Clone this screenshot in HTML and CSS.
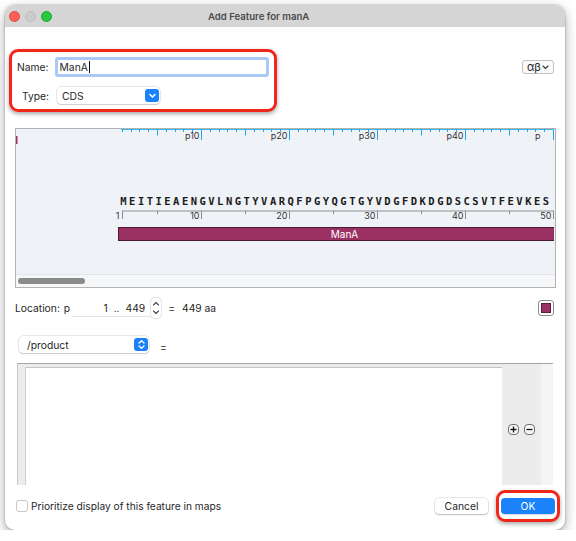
FILE: index.html
```html
<!DOCTYPE html>
<html lang="en">
<head>
    <meta charset="UTF-8">
    <title>Add Feature for manA</title>
    <link rel="stylesheet" href="styles.css">
</head>
<body>

    <div class="window">

        <!-- TITLE BAR -->
        <div class="titlebar">
            <div class="lights">
                <span class="light red"></span>
                <span class="light idle"></span>
                <span class="light green"></span>
            </div>
            <div class="title">Add Feature for manA</div>
        </div>

        <!-- NAME / TYPE -->
        <div class="top-row">
            <div class="name-box">
                <div class="field-row">
                    <label class="field-label">Name:</label>
                    <div class="text-input">ManA<span class="caret"></span></div>
                </div>
                <div class="field-row type-row">
                    <label class="field-label">Type:</label>
                    <div class="popup type-popup">
                        <span>CDS</span>
                        <span class="popup-arrow">
                            <svg width="9" height="9" viewBox="0 0 9 9"><path d="M2 3.5 L4.5 6 L7 3.5" fill="none" stroke="#fff" stroke-width="1.6" stroke-linecap="round" stroke-linejoin="round"/></svg>
                        </span>
                    </div>
                </div>
            </div>

            <div class="alpha-btn">αβ<svg width="7" height="5" viewBox="0 0 7 5"><path d="M1 1 L3.5 3.5 L6 1" fill="none" stroke="#333" stroke-width="1.1" stroke-linecap="round"/></svg></div>
        </div>

        <!-- SEQUENCE VIEW -->
        <div class="seq-view">
            <svg class="seq-canvas" width="538" height="145" viewBox="0 0 538 145">

                <!-- top ruler: one tick per residue, longer every 5 and 10 -->
                <rect x="105" y="0" width="433" height="1" fill="#3db6e8"/>
                <path class="tick-top" d="M106.5 0v3 M115.5 0v3 M123.5 0v3 M132.5 0v3 M150.5 0v3 M159.5 0v3 M167.5 0v3 M176.5 0v3
                    M194.5 0v3 M203.5 0v3 M211.5 0v3 M220.5 0v3 M238.5 0v3 M247.5 0v3 M255.5 0v3 M264.5 0v3
                    M282.5 0v3 M291.5 0v3 M299.5 0v3 M308.5 0v3 M326.5 0v3 M335.5 0v3 M343.5 0v3 M352.5 0v3
                    M370.5 0v3 M379.5 0v3 M387.5 0v3 M396.5 0v3 M414.5 0v3 M423.5 0v3 M431.5 0v3 M440.5 0v3
                    M458.5 0v3 M467.5 0v3 M475.5 0v3 M484.5 0v3 M502.5 0v3 M511.5 0v3 M519.5 0v3 M528.5 0v3
                    M141.5 0v6.5 M229.5 0v6.5 M317.5 0v6.5 M405.5 0v6.5 M493.5 0v6.5
                    M185.5 0v11 M273.5 0v11 M361.5 0v11 M449.5 0v11 M537.5 0v11"/>
                <g class="ruler-label">
                    <text x="183.5" y="9.5" text-anchor="end">p10</text>
                    <text x="271.5" y="9.5" text-anchor="end">p20</text>
                    <text x="359.5" y="9.5" text-anchor="end">p30</text>
                    <text x="447.5" y="9.5" text-anchor="end">p40</text>
                    <text x="519" y="9.5">p</text>
                </g>

                <!-- feature marker at the map edge -->
                <rect x="0" y="7" width="1.5" height="8" fill="#9b3063"/>

                <!-- residues -->
                <text class="residues" x="104.3" y="76">MEITIEAENGVLNGTYVARQFPGYQGTGYVDGFDKDGDSCSVTFEVKES</text>

                <!-- residue ruler -->
                <rect x="106" y="81.5" width="432" height="1" fill="#8f8f8f"/>
                <path class="tick-bottom" d="M106.5 82v8 M141.5 82v3 M229.5 82v3 M317.5 82v3 M405.5 82v3 M493.5 82v3
                    M185.5 82v8 M273.5 82v8 M361.5 82v8 M449.5 82v8 M537.5 82v8"/>
                <g class="ruler-label">
                    <text x="103.5" y="90" text-anchor="end">1</text>
                    <text x="183.5" y="90" text-anchor="end">10</text>
                    <text x="271.5" y="90" text-anchor="end">20</text>
                    <text x="359.5" y="90" text-anchor="end">30</text>
                    <text x="447.5" y="90" text-anchor="end">40</text>
                    <text x="535.5" y="90" text-anchor="end">50</text>
                </g>

                <!-- feature -->
                <rect x="102.5" y="98.5" width="440" height="13" fill="#9b3063" stroke="#4a1a30" stroke-width="1"/>
                <text class="feature-label" x="328.5" y="108.5" text-anchor="middle">ManA</text>
            </svg>
            <div class="hscroll"><div class="hscroll-thumb"></div></div>
        </div>

        <!-- LOCATION -->
        <div class="location-row">
            <span>Location:</span>
            <span class="loc-p">p</span>
            <div class="loc-field">1 .. 449</div>
            <div class="stepper">
                <svg width="8" height="18" viewBox="0 0 8 18"><path d="M1.5 6 L4 3.5 L6.5 6" fill="none" stroke="#444" stroke-width="1.1" stroke-linecap="round"/><path d="M1.5 12 L4 14.5 L6.5 12" fill="none" stroke="#444" stroke-width="1.1" stroke-linecap="round"/></svg>
            </div>
            <span class="eq">=</span>
            <span>449 aa</span>
            <div class="color-well"><div class="color-well-fill"></div></div>
        </div>

        <!-- QUALIFIER -->
        <div class="qual-row">
            <div class="popup qual-popup">
                <span>/product</span>
                <span class="popup-arrow">
                    <svg width="9" height="11" viewBox="0 0 9 11"><path d="M2 4 L4.5 1.8 L7 4" fill="none" stroke="#fff" stroke-width="1.4" stroke-linecap="round" stroke-linejoin="round"/><path d="M2 7 L4.5 9.2 L7 7" fill="none" stroke="#fff" stroke-width="1.4" stroke-linecap="round" stroke-linejoin="round"/></svg>
                </span>
            </div>
            <span class="eq qual-eq">=</span>
        </div>

        <div class="qual-table">
            <div class="qual-text"></div>
            <div class="qual-buttons">
                <span class="round-btn">
                    <svg width="7" height="7" viewBox="0 0 7 7"><path d="M3.5 0.5 V6.5 M0.5 3.5 H6.5" stroke="#111" stroke-width="1.3"/></svg>
                </span>
                <span class="round-btn">
                    <svg width="7" height="7" viewBox="0 0 7 7"><path d="M0.5 3.5 H6.5" stroke="#111" stroke-width="1.3"/></svg>
                </span>
            </div>
            <div class="qual-edge"></div>
        </div>

        <!-- BOTTOM -->
        <div class="bottom-row">
            <label class="check"><span class="check-box"></span>Prioritize display of this feature in maps</label>
            <button class="btn">Cancel</button>
            <div class="ok-box"><button class="btn btn-primary">OK</button></div>
        </div>

    </div>

</body>
</html>
```

FILE: styles.css
```css
*{
    margin: 0;
    padding: 0;
    box-sizing: border-box;
}


body{
    font-family: Inter, "Liberation Sans", Arial, sans-serif;
    font-size: 10px;
    color: #1f1f1f;
    background-color: #fff;
}


.window{
    margin: 5px 0 0 5px;
    width: 560px;
    height: 525px;
    background-color: #fff;
    border-radius: 10px;
    overflow: hidden;
    box-shadow: 0 0 0 1px rgba(0,0,0,.10), 0 4px 12px rgba(0,0,0,.35);
    display: flex;
    flex-direction: column;
}



/* title bar */

.titlebar{
    height: 22px;
    flex: none;
    background-color: #d5d5d5;
    display: flex;
    align-items: center;
}

.lights{
    display: flex;
    gap: 5px;
    padding-left: 4px;
}

.light{
    width: 11px;
    height: 11px;
    border-radius: 50%;
}
.light.red{ background-color: #fe5f57; border: 1px solid #e2463f; }
.light.idle{ background-color: #cbcbcb; border: 1px solid #bdbdbd; }
.light.green{ background-color: #28c840; border: 1px solid #1aab29; }

.title{
    margin-left: 156px;
    font-weight: 600;
    font-size: 9.6px;
    color: #4a4a4a;
}



/* name / type */

.top-row{
    display: flex;
    align-items: flex-start;
    margin-top: 22px;
}

.name-box{
    margin-left: 4px;
    width: 268px;
    height: 63px;
    border: 3px solid #f0271b;
    border-radius: 9px;
    box-shadow: 0 2px 4px rgba(0,0,0,.35);
    padding: 5px 5px 0 0;
}

.field-row{
    display: flex;
    align-items: center;
    height: 20px;
}
.type-row{
    margin-top: 10px;
    height: 17px;
}

.field-label{
    width: 37px;
    text-align: right;
    margin-right: 6px;
    font-size: 10.3px;
}
.type-row .field-label{
    margin-right: 8px;
}

.text-input{
    width: 217px;
    height: 20px;
    border: 3px solid #a9c9f5;
    border-radius: 3px;
    background-color: #fff;
    padding-left: 2px;
    font-size: 10.3px;
    line-height: 14px;
    display: flex;
    align-items: center;
}
.caret{
    width: 1px;
    height: 12px;
    background-color: #111;
    margin-left: 1px;
}

.popup{
    height: 17px;
    background-color: #fff;
    border-radius: 4px;
    box-shadow: 0 0 0 0.5px rgba(0,0,0,.18), 0 1px 1px rgba(0,0,0,.12);
    display: flex;
    align-items: center;
    justify-content: space-between;
    padding: 0 1px 0 5px;
    font-size: 10.3px;
}
.type-popup{
    width: 103px;
}

.popup-arrow{
    width: 14px;
    height: 13px;
    border-radius: 3px;
    background-color: #1a82fb;
    display: flex;
    align-items: center;
    justify-content: center;
}

.alpha-btn{
    margin: 11px 11px 0 auto;
    width: 32px;
    height: 14px;
    border: 1px solid #c2c2c2;
    border-radius: 3px;
    background-color: #fafafa;
    display: flex;
    align-items: center;
    justify-content: center;
    gap: 1px;
    font-size: 11px;
    color: #222;
}



/* sequence view */

.seq-view{
    margin: 16px 0 0 10px;
    width: 541px;
    height: 160px;
    border: 1px solid #b3b3b3;
    background-color: #eff2f7;
    display: flex;
    flex-direction: column;
    overflow: hidden;
}

.seq-canvas{
    display: block;
    flex: none;
}

.tick-top{
    fill: none;
    stroke: #1aaae6;
    stroke-width: 1;
}
.tick-bottom{
    fill: none;
    stroke: #8a8a8a;
    stroke-width: 1;
}

.ruler-label{
    font-family: Inter, "Liberation Sans", sans-serif;
    font-size: 9px;
    fill: #333;
}

.residues{
    font-family: "DejaVu Sans Mono", monospace;
    font-weight: bold;
    font-size: 10.5px;
    letter-spacing: 2.48px;
    fill: #1b1b1b;
}

.feature-label{
    font-family: Inter, "Liberation Sans", sans-serif;
    font-size: 10px;
    fill: #fff;
}

.hscroll{
    flex: 1;
    background-color: #f6f7f8;
    border-top: 1px solid #e3e5e8;
    padding: 3px 0 0 2px;
}
.hscroll-thumb{
    width: 67px;
    height: 6px;
    border-radius: 3px;
    background-color: #8b8b8b;
}



/* location */

.location-row{
    display: flex;
    align-items: center;
    height: 21px;
    margin: 9px 0 0 10px;
    font-size: 10.3px;
}

.loc-p{
    margin-left: 4px;
}

.loc-field{
    width: 78px;
    height: 18px;
    margin-left: 2px;
    background-color: #fff;
    border-bottom: 1px solid #e2e2e2;
    text-align: right;
    padding-right: 5px;
    line-height: 18px;
    word-spacing: 3px;
}

.stepper{
    width: 10px;
    height: 20px;
    margin-left: 1px;
    border-radius: 3px;
    background-color: #fff;
    box-shadow: 0 0 0 0.5px rgba(0,0,0,.2);
    display: flex;
    align-items: center;
    justify-content: center;
}

.eq{
    margin: 0 7px;
}

.color-well{
    margin: 0 11px 0 auto;
    width: 16px;
    height: 16px;
    border: 1px solid #8e8e8e;
    border-radius: 3px;
    background-color: #fff;
    padding: 2px;
}
.color-well-fill{
    width: 100%;
    height: 100%;
    background-color: #9b3063;
    border: 1px solid #5a1f3a;
}



/* qualifiers */

.qual-row{
    display: flex;
    align-items: center;
    height: 17px;
    margin: 18px 0 0 14px;
    font-size: 10.3px;
}

.qual-popup{
    width: 130px;
    padding-left: 8px;
}

.qual-eq{
    margin: 4px 0 0 11px;
}

.qual-table{
    margin: 10px 0 0 12px;
    width: 536px;
    height: 122px;
    flex: none;
    display: flex;
    border-top: 1px solid #a6a6a6;
    border-left: 1px solid #c9c9c9;
    background-color: #ececec;
    padding: 3px 0 0 7px;
}

.qual-text{
    width: 477px;
    background-color: #fff;
    border-top: 1px solid #c4c4c4;
    border-left: 1px solid #cfcfcf;
}

.qual-buttons{
    width: 39px;
    display: flex;
    align-items: center;
    justify-content: center;
    gap: 5px;
    padding-top: 6px;
}

.round-btn{
    width: 11px;
    height: 11px;
    border: 1px solid #6f6f6f;
    border-radius: 4px;
    background-color: #f7f7f7;
    display: flex;
    align-items: center;
    justify-content: center;
}

.qual-edge{
    flex: 1;
    margin-top: -3px;
    background-color: #f5f5f5;
}



/* bottom */

.bottom-row{
    display: flex;
    align-items: center;
    height: 32px;
    margin-top: 5px;
}

.check{
    display: flex;
    align-items: center;
    margin-left: 11px;
    font-size: 10.2px;
}

.check-box{
    width: 12px;
    height: 12px;
    border: 1px solid #c6c6c6;
    border-radius: 3px;
    background-color: #fff;
    margin-right: 3px;
}

.btn{
    font-family: inherit;
    font-size: 10.3px;
    width: 53px;
    height: 16px;
    border: none;
    border-radius: 4px;
    background-color: #fff;
    color: #1f1f1f;
    box-shadow: 0 0 0 0.5px rgba(0,0,0,.18), 0 1px 1.5px rgba(0,0,0,.18);
}

.bottom-row > .btn{
    margin-left: auto;
}

.ok-box{
    margin: 0 5px 0 8px;
    width: 64px;
    height: 32px;
    border: 3px solid #f0271b;
    border-radius: 9px;
    box-shadow: 0 2px 4px rgba(0,0,0,.35);
    display: flex;
    align-items: center;
    justify-content: center;
}

.btn-primary{
    width: 54px;
    background-color: #1a82fb;
    color: #fff;
    box-shadow: 0 1px 1px rgba(0,0,0,.15);
}
```
